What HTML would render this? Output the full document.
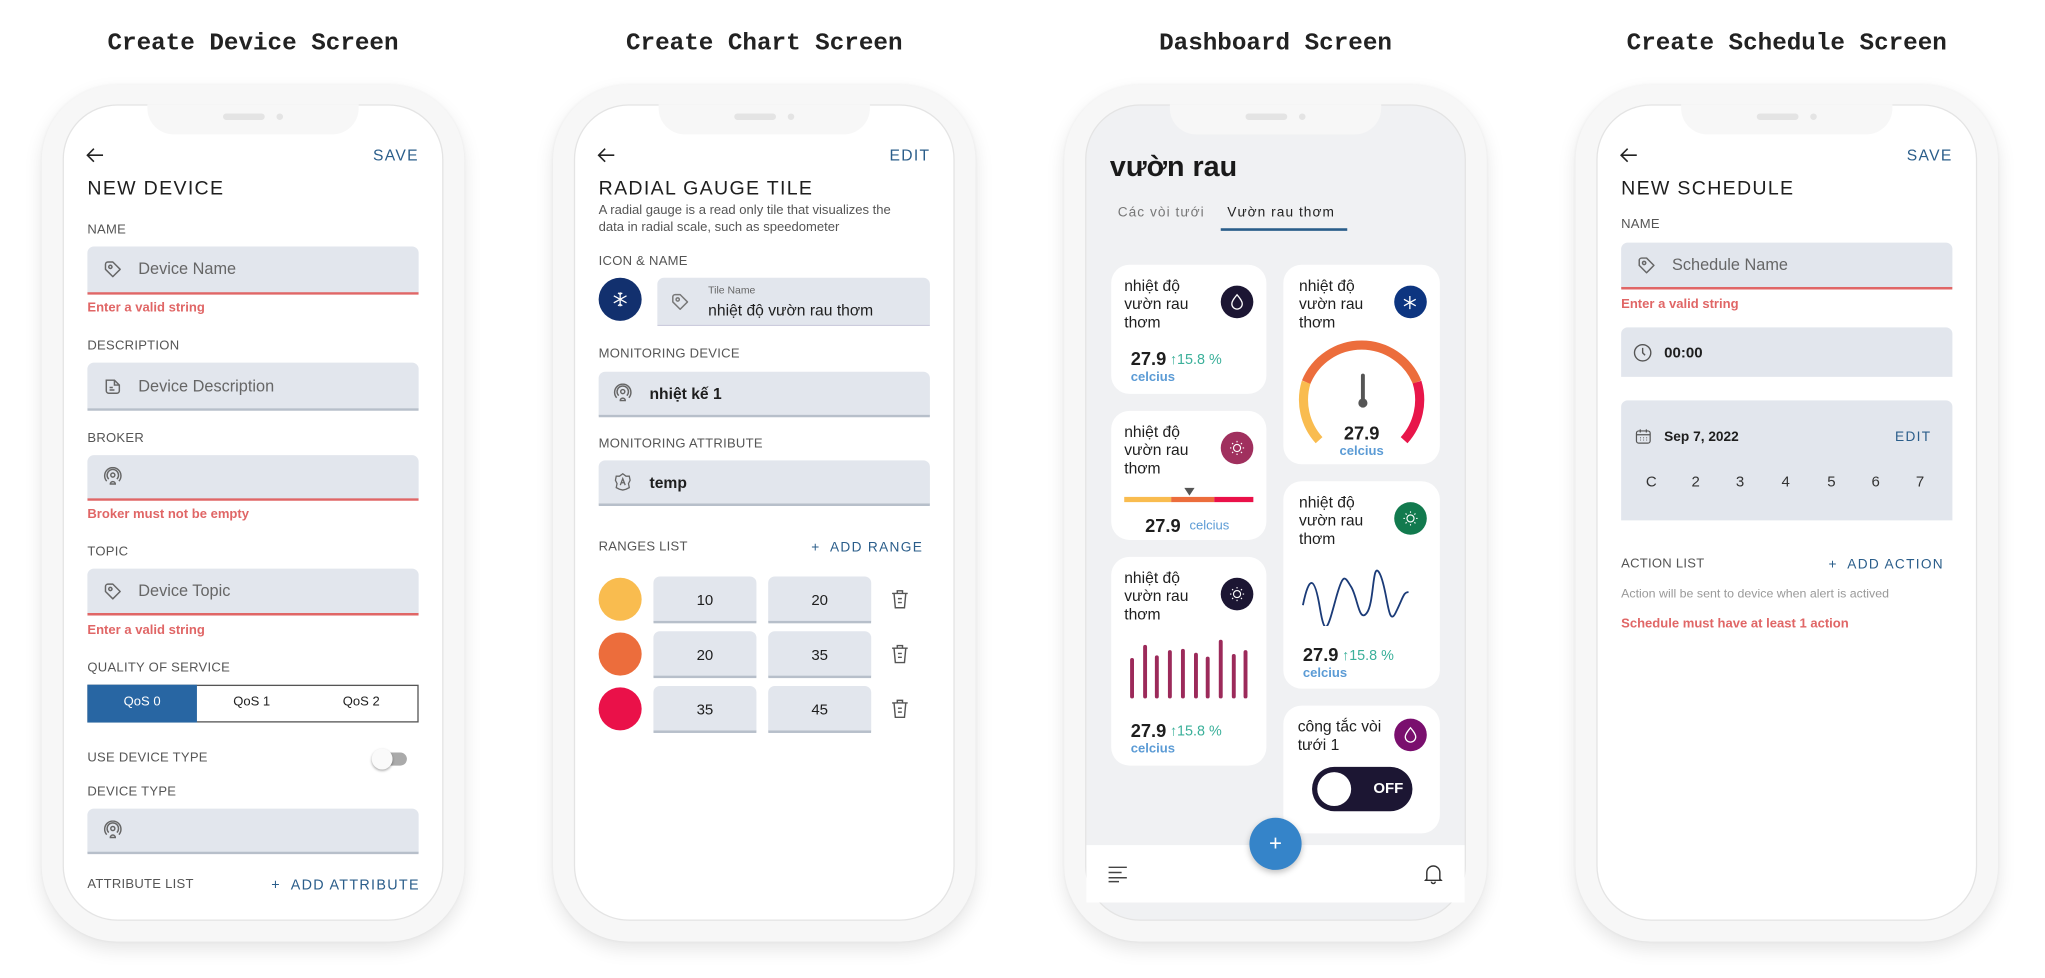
<!DOCTYPE html>
<html><head><meta charset="utf-8">
<style>
html,body{margin:0;padding:0;background:#fff;width:2045px;height:978px;overflow:hidden}
#w{position:absolute;left:0;top:0;width:1568px;height:750px;transform:scale(1.30421);transform-origin:0 0;font-family:"Liberation Sans","Noto Sans CJK SC",sans-serif;color:#1e1e1e}
.a{position:absolute}
.t{position:absolute;white-space:nowrap;line-height:14px}
.h{font-family:"Liberation Mono",monospace;font-weight:bold;font-size:18.6px;color:#222;text-align:center;width:320px;line-height:22px;top:23px}
.frame{position:absolute;top:65px;width:324px;height:657px;border-radius:58px;background:#f7f7f7;box-shadow:0 6px 14px rgba(0,0,0,.10),0 0 3px rgba(0,0,0,.05)}
.scr{position:absolute;left:16px;top:15px;width:290px;height:624px;border-radius:42px;background:#fff;border:1px solid #e4e4e4;overflow:hidden}
.notch{position:absolute;left:80px;top:0;width:162px;height:23px;background:#f7f7f7;border-radius:0 0 20px 20px}
.spk{position:absolute;left:58px;top:7px;width:32px;height:5px;border-radius:3px;background:#e4e4e4}
.dot{position:absolute;left:99px;top:7px;width:5px;height:5px;border-radius:50%;background:#e4e4e4}
.lbl{font-size:10px;color:#555;letter-spacing:.2px}
.inp{position:absolute;background:#e2e6ed;border-radius:5px 5px 0 0;box-sizing:border-box}
.red{border-bottom:2px solid #e06666}
.gry{border-bottom:2px solid #b7bfca}
.ph{font-size:12.5px;color:#666}
.err{font-size:10px;font-weight:bold;color:#e06666}
.blue{color:#2a5d8a;letter-spacing:1px;font-size:12px}
.ttl{font-size:15px;letter-spacing:1px;color:#1e1e1e}
.card{position:absolute;background:#fff;border-radius:14px}
.ct{font-size:12px;line-height:14px;color:#1e1e1e;position:absolute;white-space:nowrap}
.ic{position:absolute;width:25px;height:25px;border-radius:50%}
.v{font-weight:bold;font-size:14px}
.up{color:#3bb09a;font-size:11px}
.cel{color:#5b9bd5;font-size:10px;font-weight:bold}
</style></head><body><div id="w">

<div class="t h" style="left:34px">Create Device Screen</div>
<div class="t h" style="left:426px">Create Chart Screen</div>
<div class="t h" style="left:818px">Dashboard Screen</div>
<div class="t h" style="left:1210px">Create Schedule Screen</div>

<div class="frame" style="left:32px"><div class="scr"></div><div class="notch" style="left:81px;top:15px"><div class="spk"></div><div class="dot"></div></div></div>
<div class="frame" style="left:424px"><div class="scr"></div><div class="notch" style="left:81px;top:15px"><div class="spk"></div><div class="dot"></div></div></div>
<div class="frame" style="left:816px"><div class="scr" style="background:#f0f1f3"></div><div class="notch" style="left:81px;top:15px"><div class="spk"></div><div class="dot"></div></div></div>
<div class="frame" style="left:1208px"><div class="scr"></div><div class="notch" style="left:81px;top:15px"><div class="spk"></div><div class="dot"></div></div></div>

<!-- PHONE 1 -->
<svg class="a" style="left:66px;top:113px" width="14" height="12" viewBox="0 0 14 12"><path d="M13 6H1M6 1L1 6l5 5" fill="none" stroke="#222" stroke-width="1.2"/></svg>
<div class="t blue" style="left:286px;top:112px">SAVE</div>
<div class="t ttl" style="left:67px;top:138px">NEW DEVICE</div>
<div class="t lbl" style="left:67px;top:170px">NAME</div>
<div class="inp red" style="left:67px;top:189px;width:254px;height:37px"></div>
<svg class="a" style="left:79px;top:199px" width="15" height="15" viewBox="0 0 24 24" fill="none" stroke="#666" stroke-width="1.8" stroke-linejoin="round"><path d="M3 6a3 3 0 013-3h6l9 9-9 9-9-9z"/><circle cx="9" cy="9" r="2"/></svg>
<div class="t ph" style="left:106px;top:199px">Device Name</div>
<div class="t err" style="left:67px;top:230px">Enter a valid string</div>
<div class="t lbl" style="left:67px;top:259px">DESCRIPTION</div>
<div class="inp gry" style="left:67px;top:278px;width:254px;height:37px"></div>
<svg class="a" style="left:79px;top:289px" width="15" height="15" viewBox="0 0 24 24" fill="none" stroke="#666" stroke-width="1.8"><path d="M4 4h10l6 6v7a3 3 0 01-3 3H7a3 3 0 01-3-3z M14 4v6h6 M8 13h4 M8 16h6"/></svg>
<div class="t ph" style="left:106px;top:289px">Device Description</div>
<div class="t lbl" style="left:67px;top:330px">BROKER</div>
<div class="inp red" style="left:67px;top:349px;width:254px;height:35px"></div>
<svg class="a" style="left:79px;top:358px" width="15" height="15" viewBox="0 0 24 24" fill="none" stroke="#666" stroke-width="1.8"><circle cx="12" cy="10" r="2.5"/><path d="M7 15a7 7 0 1110 0 M4.5 17.5a10 10 0 1115 0 M9 21a3 3 0 016 0z"/></svg>
<div class="t err" style="left:67px;top:388px">Broker must not be empty</div>
<div class="t lbl" style="left:67px;top:417px">TOPIC</div>
<div class="inp red" style="left:67px;top:436px;width:254px;height:36px"></div>
<svg class="a" style="left:79px;top:446px" width="15" height="15" viewBox="0 0 24 24" fill="none" stroke="#666" stroke-width="1.8" stroke-linejoin="round"><path d="M3 6a3 3 0 013-3h6l9 9-9 9-9-9z"/><circle cx="9" cy="9" r="2"/></svg>
<div class="t ph" style="left:106px;top:446px">Device Topic</div>
<div class="t err" style="left:67px;top:477px">Enter a valid string</div>
<div class="t lbl" style="left:67px;top:506px">QUALITY OF SERVICE</div>
<div class="a" style="left:67px;top:525px;width:252px;height:27px;border:1px solid #555;background:#fff"></div>
<div class="a" style="left:67px;top:525px;width:84px;height:29px;background:#2866a3"></div>
<div class="t" style="left:67px;top:532px;width:84px;text-align:center;font-size:10px;color:#fff">QoS 0</div>
<div class="t" style="left:151px;top:532px;width:84px;text-align:center;font-size:10px">QoS 1</div>
<div class="t" style="left:235px;top:532px;width:84px;text-align:center;font-size:10px">QoS 2</div>
<div class="t lbl" style="left:67px;top:575px">USE DEVICE TYPE</div>
<div class="a" style="left:290px;top:577px;width:22px;height:10px;border-radius:5px;background:#aaa"></div>
<div class="a" style="left:285px;top:574px;width:16px;height:16px;border-radius:50%;background:#fafafa;box-shadow:0 1px 2px rgba(0,0,0,.35)"></div>
<div class="t lbl" style="left:67px;top:601px">DEVICE TYPE</div>
<div class="inp gry" style="left:67px;top:620px;width:254px;height:35px"></div>
<svg class="a" style="left:79px;top:629px" width="15" height="15" viewBox="0 0 24 24" fill="none" stroke="#666" stroke-width="1.8"><circle cx="12" cy="10" r="2.5"/><path d="M7 15a7 7 0 1110 0 M4.5 17.5a10 10 0 1115 0 M9 21a3 3 0 016 0z"/></svg>
<div class="t lbl" style="left:67px;top:672px">ATTRIBUTE LIST</div>
<div class="t blue" style="left:208px;top:672px;font-size:11px">+&nbsp; ADD ATTRIBUTE</div>

<!-- PHONE 2 -->
<svg class="a" style="left:458px;top:113px" width="14" height="12" viewBox="0 0 14 12"><path d="M13 6H1M6 1L1 6l5 5" fill="none" stroke="#222" stroke-width="1.2"/></svg>
<div class="t blue" style="left:682px;top:112px">EDIT</div>
<div class="t ttl" style="left:459px;top:138px">RADIAL GAUGE TILE</div>
<div class="t" style="left:459px;top:155px;font-size:10px;color:#555;line-height:13px">A radial gauge is a read only tile that visualizes the<br>data in radial scale, such as speedometer</div>
<div class="t lbl" style="left:459px;top:194px">ICON &amp; NAME</div>
<div class="a" style="left:459px;top:213px;width:33px;height:33px;border-radius:50%;background:#12306e"></div>
<svg class="a" style="left:469px;top:223px" width="13" height="13" viewBox="0 0 24 24" fill="none" stroke="#fff" stroke-width="1.8"><path d="M12 2v20M3 7l18 10M3 17l18-10M9 3l3 2 3-2M9 21l3-2 3 2"/></svg>
<div class="inp" style="left:504px;top:213px;width:209px;height:37px;border-bottom:1px solid #ccd"></div>
<svg class="a" style="left:514px;top:224px" width="15" height="15" viewBox="0 0 24 24" fill="none" stroke="#777" stroke-width="1.8" stroke-linejoin="round"><path d="M3 6a3 3 0 013-3h6l9 9-9 9-9-9z"/><circle cx="9" cy="9" r="2"/></svg>
<div class="t" style="left:543px;top:218px;font-size:8px;color:#666;line-height:10px">Tile Name</div>
<div class="t" style="left:543px;top:231px;font-size:12px;color:#1e1e1e">nhiệt độ vườn rau thơm</div>
<div class="t lbl" style="left:459px;top:265px">MONITORING DEVICE</div>
<div class="inp gry" style="left:459px;top:285px;width:254px;height:35px"></div>
<svg class="a" style="left:470px;top:294px" width="15" height="15" viewBox="0 0 24 24" fill="none" stroke="#666" stroke-width="1.8"><circle cx="12" cy="10" r="2.5"/><path d="M7 15a7 7 0 1110 0 M4.5 17.5a10 10 0 1115 0 M9 21a3 3 0 016 0z"/></svg>
<div class="t" style="left:498px;top:295px;font-size:12px;font-weight:bold">nhiệt kế 1</div>
<div class="t lbl" style="left:459px;top:334px">MONITORING ATTRIBUTE</div>
<div class="inp gry" style="left:459px;top:353px;width:254px;height:35px"></div>
<svg class="a" style="left:470px;top:362px" width="15" height="15" viewBox="0 0 24 24" fill="none" stroke="#666" stroke-width="1.6"><path d="M12 2l4 3h4l1 5-2 4 1 5-4 2-4 1-4-1-4-2 1-5-2-4 1-5h4z"/><path d="M9 16l3-8 3 8M10 13h4"/></svg>
<div class="t" style="left:498px;top:363px;font-size:12px;font-weight:bold">temp</div>
<div class="t lbl" style="left:459px;top:413px">RANGES LIST</div>
<div class="t blue" style="left:622px;top:413px;font-size:10.5px">+&nbsp; ADD RANGE</div>
<div class="a" style="left:459px;top:443px;width:33px;height:33px;border-radius:50%;background:#f9bc4f"></div>
<div class="a" style="left:459px;top:485px;width:33px;height:33px;border-radius:50%;background:#ec6d3c"></div>
<div class="a" style="left:459px;top:527px;width:33px;height:33px;border-radius:50%;background:#ea1149"></div>
<div class="inp gry" style="left:501px;top:442px;width:79px;height:36px"></div><div class="t" style="left:501px;top:454px;width:79px;text-align:center;font-size:11.5px">10</div>
<div class="inp gry" style="left:589px;top:442px;width:79px;height:36px"></div><div class="t" style="left:589px;top:454px;width:79px;text-align:center;font-size:11.5px">20</div>
<div class="inp gry" style="left:501px;top:484px;width:79px;height:36px"></div><div class="t" style="left:501px;top:496px;width:79px;text-align:center;font-size:11.5px">20</div>
<div class="inp gry" style="left:589px;top:484px;width:79px;height:36px"></div><div class="t" style="left:589px;top:496px;width:79px;text-align:center;font-size:11.5px">35</div>
<div class="inp gry" style="left:501px;top:526px;width:79px;height:36px"></div><div class="t" style="left:501px;top:538px;width:79px;text-align:center;font-size:11.5px">35</div>
<div class="inp gry" style="left:589px;top:526px;width:79px;height:36px"></div><div class="t" style="left:589px;top:538px;width:79px;text-align:center;font-size:11.5px">45</div>
<svg class="a" style="left:683px;top:452px" width="14" height="15" viewBox="0 0 14 15" fill="none" stroke="#555" stroke-width="1.1"><path d="M1 3h12M5 3V1h4v2M2.5 3l1 11h7l1-11M5.5 7h3M5.5 10h3"/></svg>
<svg class="a" style="left:683px;top:494px" width="14" height="15" viewBox="0 0 14 15" fill="none" stroke="#555" stroke-width="1.1"><path d="M1 3h12M5 3V1h4v2M2.5 3l1 11h7l1-11M5.5 7h3M5.5 10h3"/></svg>
<svg class="a" style="left:683px;top:536px" width="14" height="15" viewBox="0 0 14 15" fill="none" stroke="#555" stroke-width="1.1"><path d="M1 3h12M5 3V1h4v2M2.5 3l1 11h7l1-11M5.5 7h3M5.5 10h3"/></svg>

<!-- PHONE 3 -->
<div class="t" style="left:851px;top:115px;font-size:22px;font-weight:bold;line-height:26px;color:#1a1a1a">vườn rau</div>
<div class="t" style="left:857px;top:156px;font-size:10.5px;color:#777;letter-spacing:.8px">Các vòi tưới</div>
<div class="t" style="left:941px;top:156px;font-size:10.5px;color:#222;letter-spacing:.8px">Vườn rau thơm</div>
<div class="a" style="left:936px;top:175px;width:97px;height:2px;background:#2a5d8a"></div>

<div class="card" style="left:852px;top:203px;width:119px;height:99px"></div>
<div class="ct" style="left:862px;top:212px">nhiệt độ<br>vườn rau<br>thơm</div>
<div class="ic" style="left:936px;top:219px;background:#1c1633"></div>
<svg class="a" style="left:943px;top:225px" width="11" height="13" viewBox="0 0 11 13"><path d="M5.5 1C3 4 1.5 6 1.5 8a4 4 0 008 0c0-2-1.5-4-4-7z" fill="none" stroke="#fff" stroke-width="1"/></svg>
<div class="t v" style="left:867px;top:268px">27.9</div><div class="t up" style="left:897px;top:269px">↑15.8 %</div>
<div class="t cel" style="left:867px;top:283px">celcius</div>

<div class="card" style="left:984px;top:203px;width:120px;height:153px"></div>
<div class="ct" style="left:996px;top:212px">nhiệt độ<br>vườn rau<br>thơm</div>
<div class="ic" style="left:1069px;top:219px;background:#0d3580"></div>
<svg class="a" style="left:1075px;top:226px" width="12" height="12" viewBox="0 0 24 24" fill="none" stroke="#fff" stroke-width="2"><path d="M12 2v20M3 7l18 10M3 17l18-10"/></svg>
<svg class="a" style="left:984px;top:250px" width="120" height="100" viewBox="0 0 120 100">
<g fill="none" stroke-width="7">
<path d="M27.4 87.5 A46 46 0 0 1 17.5 43" stroke="#f9bc4f"/>
<path d="M17.5 43 A46 46 0 0 1 102.5 43" stroke="#ec6d3c"/>
<path d="M102.5 43 A46 46 0 0 1 92.6 87.5" stroke="#e8164a"/>
</g>
<path d="M61 38v20" stroke="#555" stroke-width="3" stroke-linecap="round"/><circle cx="61" cy="59" r="3.5" fill="#555"/>
</svg>
<div class="t v" style="left:984px;top:325px;width:120px;text-align:center">27.9</div>
<div class="t cel" style="left:984px;top:340px;width:120px;text-align:center">celcius</div>

<div class="card" style="left:852px;top:315px;width:119px;height:99px"></div>
<div class="ct" style="left:862px;top:324px">nhiệt độ<br>vườn rau<br>thơm</div>
<div class="ic" style="left:936px;top:331px;background:#a0305e"></div>
<svg class="a" style="left:942px;top:337px" width="13" height="13" viewBox="0 0 24 24" fill="none" stroke="#fff" stroke-width="1.6"><circle cx="12" cy="12" r="5"/><path d="M12 2v2M12 20v2M2 12h2M20 12h2M5 5l1.5 1.5M17.5 17.5L19 19M5 19l1.5-1.5M17.5 6.5L19 5"/></svg>
<div class="a" style="left:862px;top:381px;width:36px;height:4px;background:#f9bc4f"></div>
<div class="a" style="left:898px;top:381px;width:33px;height:4px;background:#ec6d3c"></div>
<div class="a" style="left:931px;top:381px;width:30px;height:4px;background:#ea1149"></div>
<svg class="a" style="left:908px;top:374px" width="8" height="6"><path d="M0 0h8L4 6z" fill="#555"/></svg>
<div class="t v" style="left:878px;top:396px">27.9</div><div class="t cel" style="left:912px;top:397px;font-weight:normal">celcius</div>

<div class="card" style="left:984px;top:369px;width:120px;height:159px"></div>
<div class="ct" style="left:996px;top:378px">nhiệt độ<br>vườn rau<br>thơm</div>
<div class="ic" style="left:1069px;top:385px;background:#127a4e"></div>
<svg class="a" style="left:1075px;top:391px" width="13" height="13" viewBox="0 0 24 24" fill="none" stroke="#fff" stroke-width="1.6"><circle cx="12" cy="12" r="5"/><path d="M12 2v2M12 20v2M2 12h2M20 12h2M5 5l1.5 1.5M17.5 17.5L19 19M5 19l1.5-1.5M17.5 6.5L19 5"/></svg>
<svg class="a" style="left:996px;top:430px" width="90" height="50" viewBox="0 0 90 50"><path d="M3 34C8 10 12 12 16 36S22 52 28 30 35 12 40 20 46 48 52 40 56 -2 62 10 68 52 74 40 80 24 84 24" fill="none" stroke="#1b3b78" stroke-width="1.4"/></svg>
<div class="t v" style="left:999px;top:495px">27.9</div><div class="t up" style="left:1029px;top:496px">↑15.8 %</div>
<div class="t cel" style="left:999px;top:510px">celcius</div>

<div class="card" style="left:852px;top:427px;width:119px;height:160px"></div>
<div class="ct" style="left:862px;top:436px">nhiệt độ<br>vườn rau<br>thơm</div>
<div class="ic" style="left:936px;top:443px;background:#1c1633"></div>
<svg class="a" style="left:942px;top:449px" width="13" height="13" viewBox="0 0 24 24" fill="none" stroke="#fff" stroke-width="1.6"><circle cx="12" cy="12" r="5"/><path d="M12 2v2M12 20v2M2 12h2M20 12h2M5 5l1.5 1.5M17.5 17.5L19 19M5 19l1.5-1.5M17.5 6.5L19 5"/></svg>
<svg class="a" style="left:864px;top:490px" width="96" height="46" viewBox="0 0 96 46"><g stroke="#9c2a5a" stroke-width="3" stroke-linecap="round"><path d="M4 44V16M14 44V6M23 44V14M33 44V10M43 44V9M53 44V12M62 44V15M72 44V2M82 44V13M91 44V10"/></g></svg>
<div class="t v" style="left:867px;top:553px">27.9</div><div class="t up" style="left:897px;top:554px">↑15.8 %</div>
<div class="t cel" style="left:867px;top:568px">celcius</div>

<div class="card" style="left:984px;top:541px;width:120px;height:98px"></div>
<div class="ct" style="left:995px;top:550px">công tắc vòi<br>tưới 1</div>
<div class="ic" style="left:1069px;top:551px;background:#7a0f6e"></div>
<svg class="a" style="left:1076px;top:557px" width="11" height="13" viewBox="0 0 11 13"><path d="M5.5 1C3 4 1.5 6 1.5 8a4 4 0 008 0c0-2-1.5-4-4-7z" fill="none" stroke="#fff" stroke-width="1"/></svg>
<div class="a" style="left:1006px;top:588px;width:77px;height:34px;border-radius:17px;background:#1c1633"></div>
<div class="a" style="left:1010px;top:592px;width:26px;height:26px;border-radius:50%;background:#fff"></div>
<div class="t" style="left:1053px;top:598px;color:#fff;font-weight:bold;font-size:11.5px">OFF</div>

<div class="a" style="left:833px;top:648px;width:290px;height:44px;background:#fff"></div>
<div class="a" style="left:958px;top:627px;width:40px;height:40px;border-radius:50%;background:#3584c9;box-shadow:0 2px 5px rgba(0,0,0,.25)"></div>
<div class="t" style="left:958px;top:639px;width:40px;text-align:center;color:#fff;font-size:17px;line-height:16px">+</div>
<svg class="a" style="left:849px;top:664px" width="16" height="13" viewBox="0 0 16 13"><path d="M1 1h14M1 5h10M1 9h14M1 12h8" stroke="#444" stroke-width="1.1"/></svg>
<svg class="a" style="left:1092px;top:662px" width="14" height="16" viewBox="0 0 14 16" fill="none" stroke="#333" stroke-width="1.1"><path d="M2 12V7a5 5 0 0110 0v5l1 1H1z M5.5 14a1.5 1.5 0 003 0"/></svg>

<!-- PHONE 4 -->
<svg class="a" style="left:1242px;top:113px" width="14" height="12" viewBox="0 0 14 12"><path d="M13 6H1M6 1L1 6l5 5" fill="none" stroke="#222" stroke-width="1.2"/></svg>
<div class="t blue" style="left:1462px;top:112px">SAVE</div>
<div class="t ttl" style="left:1243px;top:138px">NEW SCHEDULE</div>
<div class="t lbl" style="left:1243px;top:166px">NAME</div>
<div class="inp red" style="left:1243px;top:186px;width:254px;height:36px"></div>
<svg class="a" style="left:1255px;top:196px" width="15" height="15" viewBox="0 0 24 24" fill="none" stroke="#666" stroke-width="1.8" stroke-linejoin="round"><path d="M3 6a3 3 0 013-3h6l9 9-9 9-9-9z"/><circle cx="9" cy="9" r="2"/></svg>
<div class="t ph" style="left:1282px;top:196px">Schedule Name</div>
<div class="t err" style="left:1243px;top:227px">Enter a valid string</div>
<div class="inp" style="left:1243px;top:251px;width:254px;height:38px"></div>
<svg class="a" style="left:1252px;top:263px" width="15" height="15" viewBox="0 0 24 24" fill="none" stroke="#555" stroke-width="1.7"><circle cx="12" cy="12" r="10"/><path d="M12 6v6l3 3"/></svg>
<div class="t" style="left:1276px;top:264px;font-size:11.5px;font-weight:bold">00:00</div>
<div class="inp" style="left:1243px;top:307px;width:254px;height:92px"></div>
<svg class="a" style="left:1253px;top:327px" width="14" height="15" viewBox="0 0 24 24" fill="none" stroke="#555" stroke-width="1.6"><rect x="3" y="5" width="18" height="16" rx="3"/><path d="M3 10h18M8 3v4M16 3v4M8 14h1M12 14h1M16 14h1M8 17h1M12 17h1M16 17h1"/></svg>
<div class="t" style="left:1276px;top:328px;font-size:10.5px;font-weight:bold">Sep 7, 2022</div>
<div class="t blue" style="left:1453px;top:328px;font-size:10.5px">EDIT</div>
<div class="t" style="left:1262px;top:363px;font-size:11.5px;color:#333">C</div>
<div class="t" style="left:1297px;top:363px;font-size:11.5px;color:#333">2</div>
<div class="t" style="left:1331px;top:363px;font-size:11.5px;color:#333">3</div>
<div class="t" style="left:1366px;top:363px;font-size:11.5px;color:#333">4</div>
<div class="t" style="left:1401px;top:363px;font-size:11.5px;color:#333">5</div>
<div class="t" style="left:1435px;top:363px;font-size:11.5px;color:#333">6</div>
<div class="t" style="left:1469px;top:363px;font-size:11.5px;color:#333">7</div>
<div class="t lbl" style="left:1243px;top:426px">ACTION LIST</div>
<div class="t blue" style="left:1402px;top:426px;font-size:10.5px">+&nbsp; ADD ACTION</div>
<div class="t" style="left:1243px;top:449px;font-size:9.5px;color:#999">Action will be sent to device when alert is actived</div>
<div class="t err" style="left:1243px;top:472px">Schedule must have at least 1 action</div>

</div></body></html>
